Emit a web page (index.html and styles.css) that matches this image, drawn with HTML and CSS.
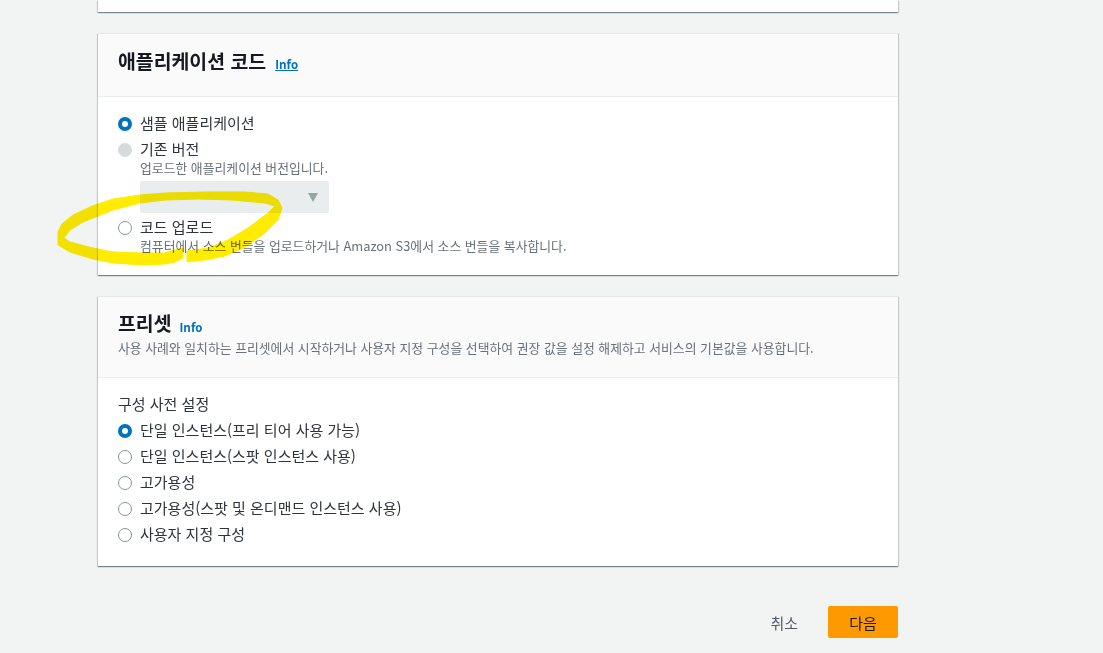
FILE: index.html
```html
<!DOCTYPE html>
<html lang="ko">
<head>
<meta charset="utf-8">
<title>애플리케이션 코드</title>
<link rel="stylesheet" href="styles.css">
</head>
<body>
<main class="page">
  <section class="card card-stub"></section>

  <section class="card">
    <header class="card-head head-code">
      <h2 class="title">애플리케이션 코드</h2>
      <a class="info info-link" href="#">Info</a>
    </header>
    <div class="card-body body-code">
      <div class="option">
        <span class="radio checked"></span>
        <span class="label">샘플 애플리케이션</span>
      </div>
      <div class="option option-existing">
        <span class="radio disabled"></span>
        <div class="option-text">
          <span class="label">기존 버전</span>
          <span class="desc">업로드한 애플리케이션 버전입니다.</span>
          <div class="select"><span class="caret"></span></div>
        </div>
      </div>
      <div class="option option-upload">
        <span class="radio"></span>
        <div class="option-text">
          <span class="label">코드 업로드</span>
          <span class="desc">컴퓨터에서 소스 번들을 업로드하거나 Amazon S3에서 소스 번들을 복사합니다.</span>
        </div>
      </div>
    </div>
  </section>

  <section class="card">
    <header class="card-head head-preset">
      <div class="title-row">
        <h2 class="title">프리셋</h2>
        <a class="info" href="#">Info</a>
      </div>
      <p class="desc">사용 사례와 일치하는 프리셋에서 시작하거나 사용자 지정 구성을 선택하여 권장 값을 설정 해제하고 서비스의 기본값을 사용합니다.</p>
    </header>
    <div class="card-body body-preset">
      <div class="field-label">구성 사전 설정</div>
      <div class="option-list">
        <div class="option"><span class="radio checked"></span><span class="label">단일 인스턴스(프리 티어 사용 가능)</span></div>
        <div class="option"><span class="radio"></span><span class="label">단일 인스턴스(스팟 인스턴스 사용)</span></div>
        <div class="option"><span class="radio"></span><span class="label">고가용성</span></div>
        <div class="option"><span class="radio"></span><span class="label">고가용성(스팟 및 온디맨드 인스턴스 사용)</span></div>
        <div class="option"><span class="radio"></span><span class="label">사용자 지정 구성</span></div>
      </div>
    </div>
  </section>

  <footer class="actions">
    <a class="btn-cancel" href="#">취소</a>
    <button class="btn-next" type="button">다음</button>
  </footer>
</main>

<svg class="marker" width="1103" height="653" viewBox="0 0 1103 653" aria-hidden="true">
  <path d="M183 248 L183 258 L175 262 L165 264 L143 265 L113 263 L93 259 L70 252 L58 245 L58 232 L62 224 L73 215 L93 205.700 L113 199 L140 195 L165 193 L205 192 L245 192 L268 194 L278 200 L282 208 L278 220 L265 233 L245 247 L225 256 L205 260 L187 262 L187 251 L208 248 L228 240 L248 228 L268 213 L275 206 L265 203 L232 200 L198 199 L165 200 L140 203 L113 210 L83 222 L70 230 L64 238 L70 242 L93 248 L113 252 L143 253 L165 253 L175 250 Z" />
</svg>
</body>
</html>
```

FILE: styles.css
```css
* { box-sizing: border-box; }
html, body { margin: 0; height: 100%; }
body {
  background: #f2f3f3;
  color: #16191f;
  font-family: "Noto Sans CJK KR", "Noto Sans", sans-serif;
  font-size: 13px;
  overflow: hidden;
  position: relative;
}
.page {
  width: 800px;
  margin-left: 98px;
  display: flex;
  flex-direction: column;
  gap: 21px;
}
.card {
  background: #fff;
  border-top: 1px solid #e4e7e7;
  box-shadow: 0 1px 1px 0 rgba(0, 28, 36, .3), 1px 1px 1px 0 rgba(0, 28, 36, .15), -1px 1px 1px 0 rgba(0, 28, 36, .15);
}
.card-stub { height: 12px; border-top: 0; }
.card-head {
  background: #fafafa;
  border-bottom: 1px solid #eaeded;
  padding: 0 20px;
}
.head-code {
  height: 63px;
  display: flex;
  align-items: center;
  padding-bottom: 8px;
  gap: 9px;
}
.head-preset { height: 81px; padding-top: 14px; }
.title-row { display: flex; align-items: center; gap: 8px; height: 24px; }
.title {
  margin: 0;
  font-size: 19.4px;
  font-weight: 700;
  line-height: 24px;
  color: #16191f;
}
.info {
  font-family: "Open Sans", sans-serif;
  font-size: 11.5px;
  font-weight: 700;
  line-height: 16px;
  color: #0073bb;
  text-decoration: none;
  margin-top: 10px;
}
.info-link { text-decoration: underline; margin-top: 7px; }
.desc {
  display: block;
  margin: 0;
  font-size: 12.85px;
  line-height: 16px;
  color: #687078;
}
.head-preset .desc { margin-top: 5px; }
.card-body { padding: 0 20px; }
.body-code { height: 178px; padding-top: 14px; }
.body-preset { height: 188px; padding-top: 17px; }
.option {
  display: flex;
  align-items: center;
  gap: 8px;
  height: 26px;
  font-size: 15px;
  color: #16191f;
}
.option-existing, .option-upload { align-items: flex-start; height: auto; }
.option-upload { margin-top: 2px; }
.option-existing .radio, .option-upload .radio { margin-top: 6px; }
.option-text { display: flex; flex-direction: column; }
.label { line-height: 24px; height: 26px; color: #2f343b; }
.option-text .desc { margin-top: -3px; }
.radio {
  flex: none;
  width: 14px;
  height: 14px;
  border-radius: 50%;
  background: #fff;
  border: 1.5px solid #879596;
}
.radio.checked { border: 4.5px solid #0073bb; }
.radio.disabled { background: #d5dbdb; border-color: #d5dbdb; }
.select {
  position: relative;
  width: 189px;
  height: 32px;
  margin-top: 5px;
  background: #eaeded;
  border-radius: 2px;
}
.caret {
  position: absolute;
  right: 11px;
  top: 12px;
  border-left: 5.5px solid transparent;
  border-right: 5.5px solid transparent;
  border-top: 9px solid #95a5a6;
}
.field-label { font-size: 15px; line-height: 18px; height: 20px; color: #2f343b; margin-bottom: 3px; }
.actions {
  display: flex;
  justify-content: flex-end;
  align-items: center;
  gap: 30px;
  margin-top: 19px;
}
.btn-cancel {
  font-size: 15px;
  color: #545b64;
  text-decoration: none;
}
.btn-next {
  width: 70px;
  height: 32px;
  padding: 0;
  border: 0;
  border-radius: 2px;
  background: #ff9900;
  color: #16191f;
  font: 400 15px "Noto Sans CJK KR", sans-serif;
}
.marker {
  position: absolute;
  left: 0;
  top: 0;
  mix-blend-mode: multiply;
  pointer-events: none;
}
.marker path {
  fill: #ffec00;
  stroke: #ffec00;
  stroke-width: 1;
  stroke-linejoin: round;
}
```
